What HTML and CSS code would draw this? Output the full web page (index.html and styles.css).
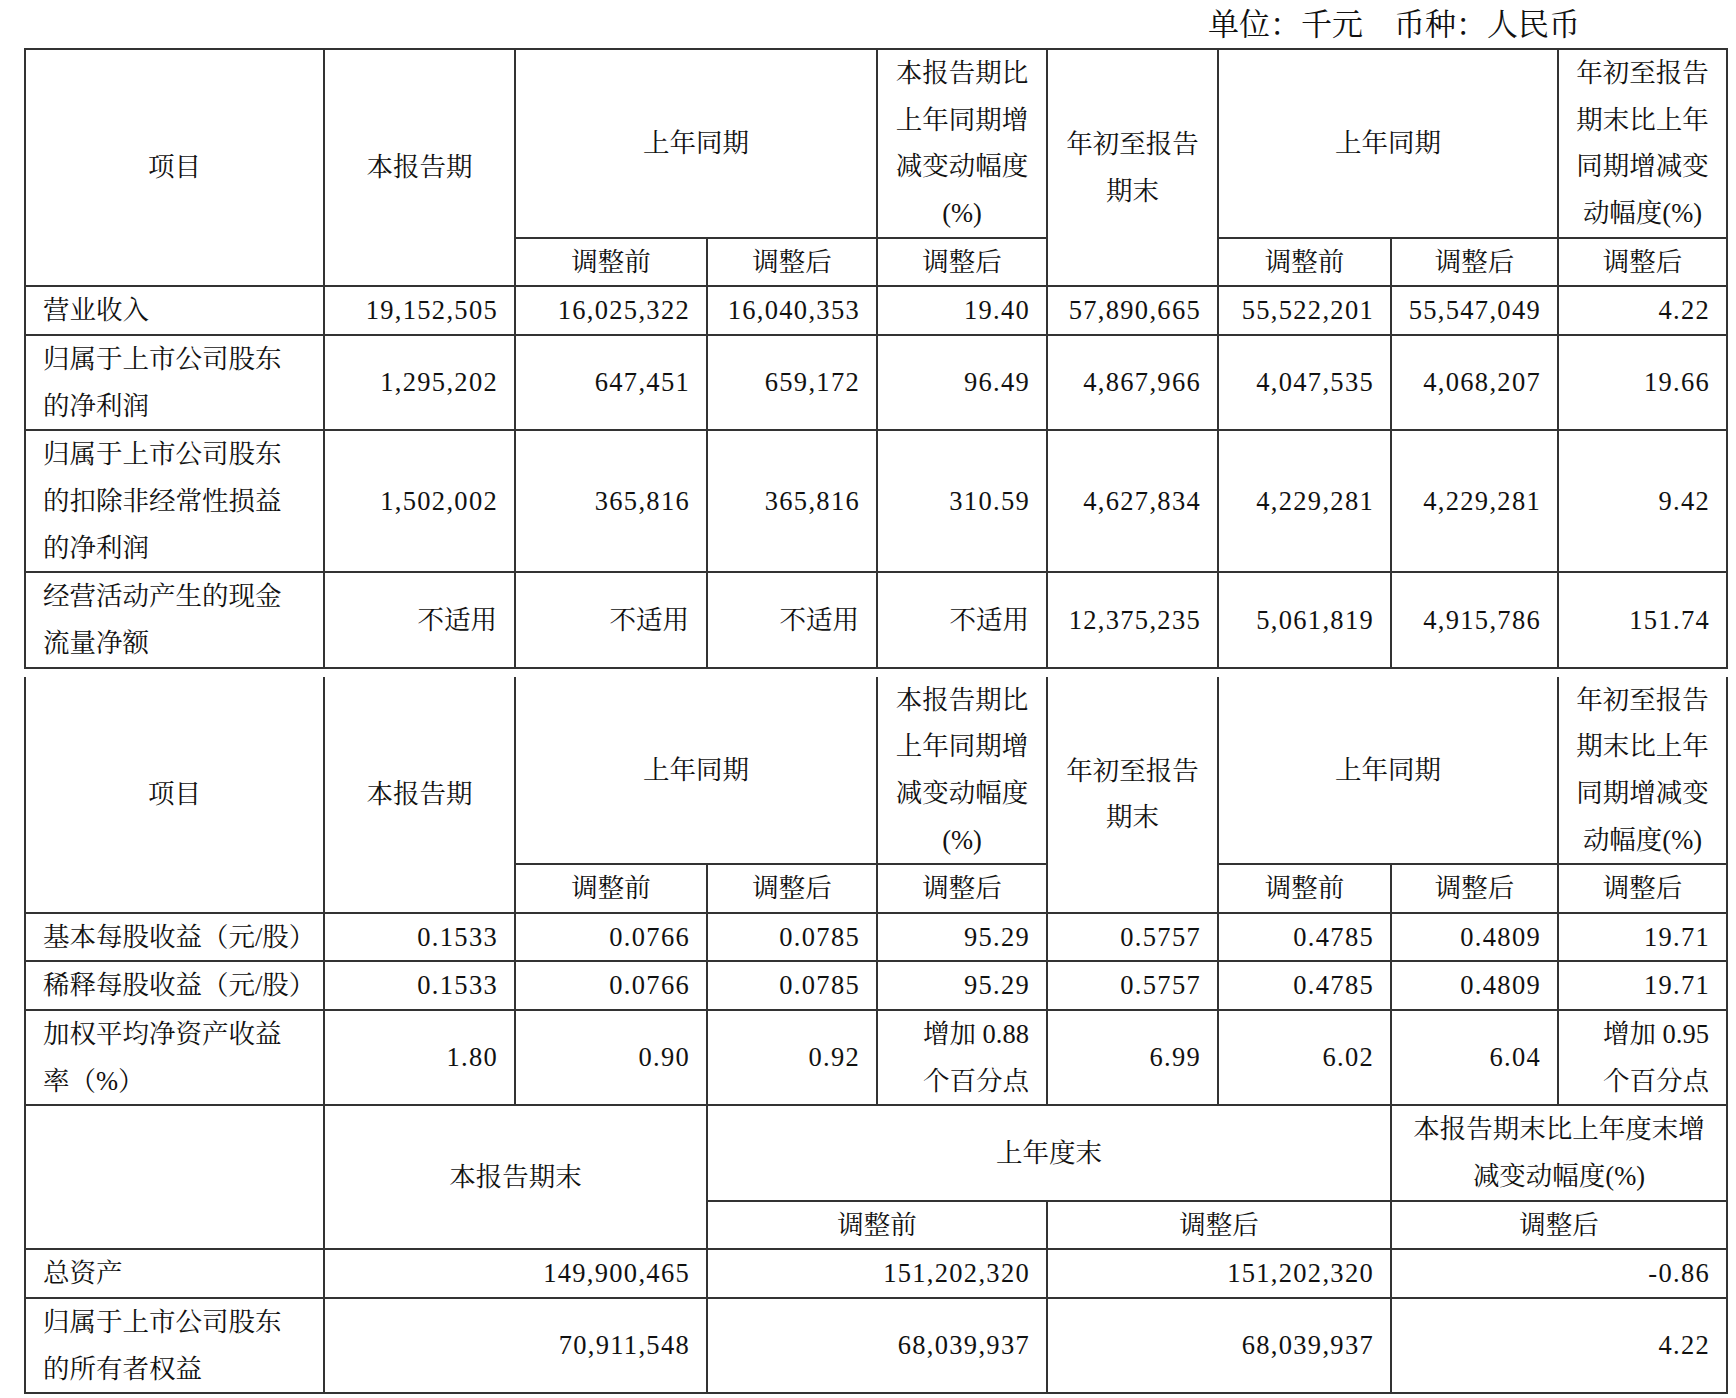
FILE: index.html
```html
<!DOCTYPE html>
<html lang="zh-CN">
<head>
<meta charset="utf-8">
<title>主要财务数据</title>
<link rel="stylesheet" href="styles.css">
</head>
<body>
<div class="unit">单位：千元　币种：人民币</div>

<table class="report">
  <colgroup>
    <col class="w0"><col class="w1"><col class="w2"><col class="w3"><col class="w4"><col class="w5"><col class="w6"><col class="w7"><col class="w8">
  </colgroup>
  <thead>
    <tr>
      <th rowspan="2">项目</th>
      <th rowspan="2">本报告期</th>
      <th colspan="2">上年同期</th>
      <th>本报告期比<br>上年同期增<br>减变动幅度<br>(%)</th>
      <th rowspan="2">年初至报告<br>期末</th>
      <th colspan="2">上年同期</th>
      <th>年初至报告<br>期末比上年<br>同期增减变<br>动幅度(%)</th>
    </tr>
    <tr>
      <th>调整前</th><th>调整后</th><th>调整后</th><th>调整前</th><th>调整后</th><th>调整后</th>
    </tr>
  </thead>
  <tbody>
    <tr>
      <td class="item">营业收入</td>
      <td class="num">19,152,505</td><td class="num">16,025,322</td><td class="num">16,040,353</td><td class="num">19.40</td>
      <td class="num">57,890,665</td><td class="num">55,522,201</td><td class="num">55,547,049</td><td class="num">4.22</td>
    </tr>
    <tr>
      <td class="item">归属于上市公司股东<br>的净利润</td>
      <td class="num">1,295,202</td><td class="num">647,451</td><td class="num">659,172</td><td class="num">96.49</td>
      <td class="num">4,867,966</td><td class="num">4,047,535</td><td class="num">4,068,207</td><td class="num">19.66</td>
    </tr>
    <tr>
      <td class="item">归属于上市公司股东<br>的扣除非经常性损益<br>的净利润</td>
      <td class="num">1,502,002</td><td class="num">365,816</td><td class="num">365,816</td><td class="num">310.59</td>
      <td class="num">4,627,834</td><td class="num">4,229,281</td><td class="num">4,229,281</td><td class="num">9.42</td>
    </tr>
    <tr>
      <td class="item">经营活动产生的现金<br>流量净额</td>
      <td class="txt">不适用</td><td class="txt">不适用</td><td class="txt">不适用</td><td class="txt">不适用</td>
      <td class="num">12,375,235</td><td class="num">5,061,819</td><td class="num">4,915,786</td><td class="num">151.74</td>
    </tr>
  </tbody>
</table>

<table class="report second">
  <colgroup>
    <col class="w0"><col class="w1"><col class="w2"><col class="w3"><col class="w4"><col class="w5"><col class="w6"><col class="w7"><col class="w8">
  </colgroup>
  <thead>
    <tr class="open-top">
      <th rowspan="2">项目</th>
      <th rowspan="2">本报告期</th>
      <th colspan="2">上年同期</th>
      <th>本报告期比<br>上年同期增<br>减变动幅度<br>(%)</th>
      <th rowspan="2">年初至报告<br>期末</th>
      <th colspan="2">上年同期</th>
      <th>年初至报告<br>期末比上年<br>同期增减变<br>动幅度(%)</th>
    </tr>
    <tr>
      <th>调整前</th><th>调整后</th><th>调整后</th><th>调整前</th><th>调整后</th><th>调整后</th>
    </tr>
  </thead>
  <tbody>
    <tr>
      <td class="item">基本每股收益（元/股）</td>
      <td class="num">0.1533</td><td class="num">0.0766</td><td class="num">0.0785</td><td class="num">95.29</td>
      <td class="num">0.5757</td><td class="num">0.4785</td><td class="num">0.4809</td><td class="num">19.71</td>
    </tr>
    <tr>
      <td class="item">稀释每股收益（元/股）</td>
      <td class="num">0.1533</td><td class="num">0.0766</td><td class="num">0.0785</td><td class="num">95.29</td>
      <td class="num">0.5757</td><td class="num">0.4785</td><td class="num">0.4809</td><td class="num">19.71</td>
    </tr>
    <tr>
      <td class="item">加权平均净资产收益<br>率（%）</td>
      <td class="num">1.80</td><td class="num">0.90</td><td class="num">0.92</td>
      <td class="txt">增加 0.88<br>个百分点</td>
      <td class="num">6.99</td><td class="num">6.02</td><td class="num">6.04</td>
      <td class="txt">增加 0.95<br>个百分点</td>
    </tr>
    <tr>
      <td rowspan="2"></td>
      <th colspan="2" rowspan="2">本报告期末</th>
      <th colspan="4">上年度末</th>
      <th colspan="2">本报告期末比上年度末增<br>减变动幅度(%)</th>
    </tr>
    <tr>
      <th colspan="2">调整前</th>
      <th colspan="2">调整后</th>
      <th colspan="2">调整后</th>
    </tr>
    <tr>
      <td class="item">总资产</td>
      <td class="num" colspan="2">149,900,465</td>
      <td class="num" colspan="2">151,202,320</td>
      <td class="num" colspan="2">151,202,320</td>
      <td class="num" colspan="2">-0.86</td>
    </tr>
    <tr>
      <td class="item">归属于上市公司股东<br>的所有者权益</td>
      <td class="num" colspan="2">70,911,548</td>
      <td class="num" colspan="2">68,039,937</td>
      <td class="num" colspan="2">68,039,937</td>
      <td class="num" colspan="2">4.22</td>
    </tr>
  </tbody>
</table>
</body>
</html>
```

FILE: styles.css
```css
html, body {
  margin: 0;
  padding: 0;
  background: #ffffff;
}

body {
  color: #111111;
  font-family: "Liberation Serif", "Noto Serif CJK SC", "Noto Sans CJK SC", serif;
  font-size: 26.5px;
}

.unit {
  height: 48px;
  line-height: 50px;
  text-align: right;
  padding-right: 156px;
  font-size: 31px;
  white-space: nowrap;
}

.report {
  margin-left: 24px;
  width: 1702px;
  table-layout: fixed;
  border-collapse: collapse;
}

.report .w0 { width: 299px; }
.report .w1 { width: 191px; }
.report .w2 { width: 192px; }
.report .w3 { width: 170px; }
.report .w4 { width: 170px; }
.report .w5 { width: 171px; }
.report .w6 { width: 173px; }
.report .w7 { width: 167px; }
.report .w8 { width: 169px; }

.report th,
.report td {
  border: 2px solid #333333;
  padding: 0;
  line-height: 46.65px;
  font-weight: normal;
  text-align: center;
  vertical-align: middle;
}

.report .item {
  text-align: left;
  padding-left: 17px;
  white-space: nowrap;
}

.report .num {
  text-align: right;
  padding-right: 16px;
  letter-spacing: 1.3px;
  white-space: nowrap;
}

.report .txt {
  text-align: right;
  padding-right: 17px;
  white-space: nowrap;
}

.second {
  margin-top: 8px;
}

.second .open-top th {
  border-top: none;
}
```
